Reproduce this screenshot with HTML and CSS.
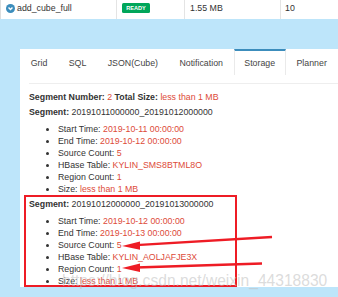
FILE: index.html
```html
<!DOCTYPE html>
<html lang="en">
<head>
    <meta charset="UTF-8">
    <title>Cube Storage</title>
    <link rel="stylesheet" href="styles.css">
</head>
<body>
    <!-- cube list row -->
    <div class="cube-row">
        <div class="cell cell-name">
            <svg class="row-icon" width="9" height="9" viewBox="0 0 10 10">
                <circle cx="5" cy="5" r="5" fill="#3c8dbc"/>
                <path d="M2.8 4 L5 6.2 L7.2 4" fill="none" stroke="#fff" stroke-width="1.6"/>
            </svg>
            add_cube_full
        </div>
        <div class="cell cell-status"><span class="badge-ready">READY</span></div>
        <div class="cell cell-size">1.55 MB</div>
        <div class="cell cell-count">10</div>
    </div>

    <div class="panel">
        <ul class="tabs">
            <li class="tab">Grid</li>
            <li class="tab">SQL</li>
            <li class="tab">JSON(Cube)</li>
            <li class="tab">Notification</li>
            <li class="tab active">Storage</li>
            <li class="tab">Planner</li>
        </ul>

        <div class="tab-body">
            <div class="summary">
                <b>Segment Number:</b> <span class="val">2</span>
                <b>Total Size:</b> <span class="val">less than 1 MB</span>
            </div>

            <div class="segment">
                <div class="seg-title"><b>Segment:</b> 20191011000000_20191012000000</div>
                <ul class="seg-info">
                    <li>Start Time: <span class="val">2019-10-11 00:00:00</span></li>
                    <li>End Time: <span class="val">2019-10-12 00:00:00</span></li>
                    <li>Source Count: <span class="val">5</span></li>
                    <li>HBase Table: <span class="val">KYLIN_SMS8BTML8O</span></li>
                    <li>Region Count: <span class="val">1</span></li>
                    <li>Size: <span class="val">less than 1 MB</span></li>
                </ul>
            </div>

            <div class="segment">
                <div class="seg-title"><b>Segment:</b> 20191012000000_20191013000000</div>
                <ul class="seg-info">
                    <li>Start Time: <span class="val">2019-10-12 00:00:00</span></li>
                    <li>End Time: <span class="val">2019-10-13 00:00:00</span></li>
                    <li>Source Count: <span class="val">5</span></li>
                    <li>HBase Table: <span class="val">KYLIN_AOLJAFJE3X</span></li>
                    <li>Region Count: <span class="val">1</span></li>
                    <li>Size: <span class="val">less than 1 MB</span></li>
                </ul>
            </div>
        </div>
    </div>

    <!-- annotations drawn over the screenshot -->
    <svg class="marks" width="338" height="297" viewBox="0 0 338 297">
        <rect x="25" y="196" width="211" height="90" fill="none" stroke="#ee1c25" stroke-width="2"/>
        <line x1="272" y1="237" x2="136" y2="245.2" stroke="#ee1c25" stroke-width="2.3"/>
        <polygon points="122,246 140,241.5 140,249.8" fill="#ee1c25"/>
        <line x1="262" y1="263.5" x2="136" y2="267.5" stroke="#ee1c25" stroke-width="2.3"/>
        <polygon points="122,268 140,263.6 140,272" fill="#ee1c25"/>
    </svg>
    <div class="watermark">https://blog.csdn.net/weixin_44318830</div>
</body>
</html>
```

FILE: styles.css
```css
:root {
    --text: #333;
    --value: #dd4b39;
    --blue-bg: #bde5fa;
    --tab-line: #3c8dbc;
    --border: #e4e4e4;
}

* {
    box-sizing: border-box;
}

body {
    margin: 0;
    width: 338px;
    height: 297px;
    overflow: hidden;
    position: relative;
    background: var(--blue-bg);
    font-family: 'Liberation Sans', Arial, sans-serif;
    font-size: 8.8px;
    line-height: 12px;
    color: var(--text);
}

.cube-row {
    display: flex;
    height: 19px;
    background: white;
    border-left: 1px solid #ddd;
}

.cell {
    display: flex;
    align-items: flex-start;
    padding: 2px 5px 0;
}

.cell + .cell {
    border-left: 1px solid var(--border);
}

.cell-name {
    width: 115px;
    gap: 2px;
}

.row-icon {
    margin-top: 1.5px;
}

.cell-status {
    width: 68px;
    padding-left: 5px;
}

.cell-size {
    width: 96px;
}

.cell-count {
    flex: 1;
    padding-left: 4px;
}

.badge-ready {
    display: inline-block;
    margin-top: 1px;
    width: 28px;
    height: 10px;
    line-height: 10px;
    background: #00a65a;
    color: white;
    font-size: 5.6px;
    font-weight: bold;
    text-align: center;
    border-radius: 1.5px;
}

.panel {
    margin: 30px 0 0 20px;
    background: white;
}

.tabs {
    display: flex;
    list-style: none;
    margin: 0;
    padding: 0;
    height: 26px;
}

.tab {
    padding: 0 9.7px;
    line-height: 24px;
    border-top: 2px solid transparent;
    border-left: 1px solid transparent;
    border-right: 1px solid transparent;
    color: #444;
}

.tab.active {
    border-top-color: var(--tab-line);
    border-left-color: #eaeaea;
    border-right-color: #eaeaea;
}

.tab-body {
    padding: 8px 0 0 9px;
}

.summary {
    border-top: 1px solid #eee;
    padding-top: 7px;
}

.val {
    color: var(--value);
}

.seg-title {
    margin-top: 3px;
}

.seg-info {
    margin: 5px 0 0;
    padding-left: 29px;
}

.marks {
    position: absolute;
    top: 0;
    left: 0;
    pointer-events: none;
}

.watermark {
    position: absolute;
    left: 62px;
    top: 272px;
    font-size: 15.6px;
    line-height: 18px;
    color: rgba(190, 190, 190, 0.55);
    white-space: nowrap;
    pointer-events: none;
}
```
